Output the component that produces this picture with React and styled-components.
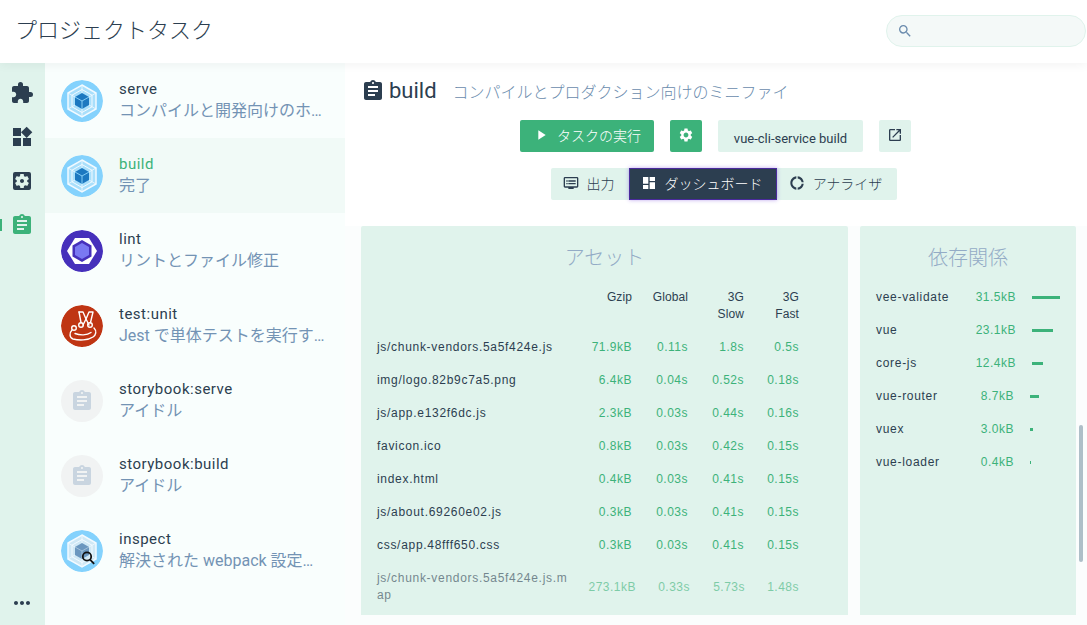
import React from 'react'
import styled, { createGlobalStyle } from 'styled-components'
import {
  MdExtension,
  MdWidgets,
  MdSettingsApplications,
  MdAssignment,
  MdMoreHoriz,
  MdSearch,
  MdPlayArrow,
  MdSettings,
  MdOpenInNew,
  MdDashboard,
  MdDonutLarge,
  MdDvr,
} from 'react-icons/md'

const FONT = '"Roboto", "Noto Sans CJK JP", sans-serif'
const DATA_FONT = '"Liberation Sans", "Noto Sans CJK JP", sans-serif'
const GREEN = '#3cb27a'
const DARK = '#2c3e50'
const BLUE = '#6a8bad'
const MINT = '#e0f3ec'

const GlobalStyle = createGlobalStyle`
  html, body {
    margin: 0;
    height: 100%;
    overflow: hidden;
    background: #fff;
    font-family: ${FONT};
    color: ${DARK};
  }
  * {
    box-sizing: border-box;
  }
`

const Page = styled.div`
  width: 1087px;
  height: 625px;
  display: flex;
  flex-direction: column;
  overflow: hidden;
`

const TopBar = styled.header`
  height: 63px;
  flex: none;
  display: flex;
  align-items: center;
  justify-content: space-between;
  padding: 0 1px 2px 15px;
  background: #fff;
  box-shadow: 0 2px 10px rgba(0, 0, 0, 0.05);
  position: relative;
  z-index: 2;
`

const PageTitle = styled.h1`
  margin: 0;
  font-size: 22px;
  font-weight: 300;
  line-height: 30px;
`

const SearchBox = styled.label`
  width: 200px;
  height: 32px;
  display: flex;
  align-items: center;
  gap: 4px;
  padding: 0 10px;
  background: #f4f9f8;
  border: 1px solid ${MINT};
  border-radius: 16px;
  color: ${BLUE};
  font-size: 16px;
`

const SearchInput = styled.input`
  flex: 1;
  min-width: 0;
  border: 0;
  outline: 0;
  background: transparent;
`

const Body = styled.div`
  flex: 1;
  min-height: 0;
  display: flex;
`

const SideNav = styled.nav`
  width: 45px;
  flex: none;
  display: flex;
  flex-direction: column;
  padding: 8px 1px 0 0;
  background: ${MINT};
`

const NavItem = styled.div`
  position: relative;
  height: 44px;
  display: flex;
  align-items: center;
  justify-content: center;
  font-size: 24px;
  color: ${(p) => (p.$active ? GREEN : DARK)};
  &::before {
    content: '';
    display: ${(p) => (p.$active ? 'block' : 'none')};
    position: absolute;
    left: 0;
    top: 16px;
    width: 2px;
    height: 12px;
    background: ${GREEN};
  }
`

const NavMore = styled(NavItem)`
  margin-top: auto;
`

const TaskList = styled.aside`
  width: 300px;
  flex: none;
  background: #f9fefd;
`

const TaskRow = styled.div`
  height: 75px;
  display: flex;
  align-items: center;
  gap: 16px;
  padding: 0 20px 0 16px;
  background: ${(p) => (p.$selected ? '#f1faf7' : 'transparent')};
`

const Avatar = styled.div`
  width: 42px;
  height: 42px;
  flex: none;
  display: flex;
  align-items: center;
  justify-content: center;
  border-radius: 50%;
  overflow: hidden;
  font-size: 24px;
  color: #c9d5e0;
  background: ${(p) => p.$bg || 'transparent'};
  svg {
    display: block;
  }
`

const TaskText = styled.div`
  min-width: 0;
  flex: 1;
  margin-top: -2px;
`

const TaskName = styled.div`
  font-size: 15px;
  line-height: 21px;
  letter-spacing: 0.5px;
  color: ${(p) => (p.$selected ? GREEN : DARK)};
`

const TaskStatus = styled.div`
  font-size: 16px;
  line-height: 21px;
  font-weight: 400;
  color: #7393b4;
  white-space: nowrap;
  overflow: hidden;
  text-overflow: ellipsis;
`

const Main = styled.main`
  position: relative;
  flex: 1;
  min-width: 0;
  display: flex;
  flex-direction: column;
  background: #fbfdfd;
`

const TaskHeader = styled.div`
  height: 57px;
  flex: none;
  display: flex;
  align-items: center;
  padding: 0 0 1px 16px;
  background: #fff;
`

const HeaderName = styled.span`
  margin-left: 4px;
  font-size: 22px;
  line-height: 30px;
`

const HeaderDesc = styled.span`
  margin-left: 16px;
  font-size: 16px;
  font-weight: 300;
  color: ${BLUE};
`

const Toolbars = styled.div`
  flex: none;
  height: 106px;
  display: flex;
  flex-direction: column;
  gap: 16px;
  background: #fff;
`

const ActionRow = styled.div`
  display: flex;
  gap: 16px;
  padding-left: 175px;
`

const TabRow = styled.div`
  display: flex;
  padding-left: 206px;
`

const Button = styled.div`
  height: 32px;
  display: flex;
  align-items: center;
  justify-content: center;
  gap: 8px;
  padding: 0 ${(p) => (p.$square ? 0 : 13)}px 3px;
  width: ${(p) => (p.$square ? '32px' : 'auto')};
  border-radius: 2px;
  font-size: 14px;
  font-weight: 300;
  white-space: nowrap;
  color: ${(p) => (p.$primary ? '#fff' : DARK)};
  background: ${(p) => (p.$primary ? GREEN : MINT)};
  svg {
    flex: none;
  }
`

const CommandButton = styled(Button)`
  width: 145px;
  font-size: 13px;
  font-weight: 400;
  padding-top: 4px;
  padding-bottom: 0;
`

const Tab = styled.div`
  width: ${(p) => p.$width}px;
  height: 32px;
  display: flex;
  align-items: center;
  justify-content: center;
  gap: 8px;
  padding: 0 3px 3px 0;
  font-size: 14px;
  font-weight: 300;
  white-space: nowrap;
  color: ${(p) => (p.$active ? '#fff' : DARK)};
  background: ${(p) => (p.$active ? DARK : MINT)};
  border-radius: ${(p) => (p.$active ? 0 : p.$end === 'left' ? '2px 0 0 2px' : '0 2px 2px 0')};
  box-shadow: ${(p) => (p.$active ? 'inset 0 0 0 1px #4a2a9c, 0 0 4px rgba(110, 60, 220, 0.45)' : 'none')};
  position: relative;
  z-index: ${(p) => (p.$active ? 1 : 0)};
`

const Dashboard = styled.div`
  flex: none;
  height: 389px;
  display: flex;
  gap: 12px;
  padding: 0 11px 0 16px;
`

const Card = styled.section`
  background: ${MINT};
  border-radius: 2px 2px 0 0;
  overflow: hidden;
  font-family: ${DATA_FONT};
  font-size: 12px;
  line-height: 17px;
`

const AssetsCard = styled(Card)`
  width: 487px;
`

const DepsCard = styled(Card)`
  width: 216px;
`

const CardTitle = styled.h2`
  margin: 0;
  padding-top: 19px;
  height: 63px;
  text-align: center;
  font-family: ${FONT};
  font-size: 20px;
  font-weight: 300;
  line-height: 26px;
  color: #93abc6;
`

const AssetRow = styled.div`
  display: grid;
  grid-template-columns: ${(p) => (p.$long ? '194px 65px 54px 55px 54px' : '190px 65px 56px 56px 55px')};
  align-items: center;
  padding: 8px 0 8px 16px;
  opacity: ${(p) => (p.$faded ? 0.6 : 1)};
`

const AssetHead = styled(AssetRow)`
  align-items: start;
  padding-top: 0;
`

const AssetName = styled.div`
  word-break: break-all;
  letter-spacing: 0.7px;
`

const HeadCell = styled.div`
  text-align: right;
  letter-spacing: 0.1px;
`

const Metric = styled.div`
  text-align: right;
  letter-spacing: 0.5px;
  color: ${GREEN};
`

const DepRow = styled.div`
  height: 33px;
  display: flex;
  align-items: center;
  padding: 0 16px;
  margin-top: ${(p) => (p.$first ? '-8px' : 0)};
`

const DepName = styled.div`
  flex: 1;
  letter-spacing: 0.7px;
`

const DepSize = styled(Metric)`
  margin-right: 16px;
`

const DepBarTrack = styled.div`
  width: ${(p) => p.$track}px;
  flex: none;
`

const DepBar = styled.div`
  height: 3px;
  background: ${GREEN};
`

const ScrollThumb = styled.div`
  position: absolute;
  right: 4px;
  top: 362px;
  width: 4px;
  height: 137px;
  border-radius: 2px;
  background: #aebfc8;
`

function WebpackLogo ({ faded }) {
  return (
    <svg width="42" height="42" viewBox="0 0 42 42">
      <circle cx="21" cy="21" r="21" fill="#84d2fd" />
      <polygon
        points="21,5 35,13 35,29 21,37 7,29 7,13"
        fill={faded ? '#cfe8f5' : '#a9dffb'}
        stroke="#f2faff"
        strokeWidth="1.5"
      />
      <polygon
        points="21,9.500 31,15.200 31,26.800 21,32.500 11,26.800 11,15.200"
        fill="none"
        stroke="#f2faff"
        strokeWidth="1"
      />
      <path d="M21 5v8M35 13l-7 4M35 29l-7-4M21 37v-8M7 29l7-4M7 13l7 4" stroke="#f2faff" strokeWidth="0.8" />
      <polygon points="21,13 28,17 28,25 21,29 14,25 14,17" fill={faded ? '#6b97bf' : '#1c78c0'} />
      <path d="M14 17l7 4 7-4M21 21v8" stroke={faded ? '#a9c6dd' : '#8ed6fb'} strokeWidth="0.9" fill="none" />
      {faded && (
        <g fill="none" stroke="#111" strokeWidth="1.8">
          <circle cx="26" cy="26.500" r="4.200" />
          <path d="M29 29.600l4.200 4.200" />
        </g>
      )}
    </svg>
  )
}

function EslintLogo () {
  return (
    <svg width="42" height="42" viewBox="0 0 42 42">
      <circle cx="21" cy="21" r="21" fill="#4630bb" />
      <polygon points="6,21 14,8 28,8 36,21 28,34 14,34" fill="#fff" />
      <polygon points="21,10 30.500,15.500 30.500,26.500 21,32 11.500,26.500 11.500,15.500" fill="#4630bb" />
      <polygon points="21,13 28,17 28,25 21,29 14,25 14,17" fill="#7a78f2" />
    </svg>
  )
}

function JestLogo () {
  return (
    <svg width="42" height="42" viewBox="0 0 42 42">
      <circle cx="21" cy="21" r="21" fill="#bf3513" />
      <g fill="none" stroke="#fff" strokeWidth="1.4" strokeLinejoin="round" strokeLinecap="round">
        <path d="M18 7h4l3 7 3-7h4l-2.500 10.500" />
        <path d="M18 7l2 10.500M22 20l3-6 3 6" />
        <circle cx="13" cy="23" r="2.300" />
        <circle cx="20" cy="20" r="2.300" />
        <circle cx="29" cy="20" r="2.300" />
        <path d="M11 25c-3 3-2.500 8 1 9 6 1.500 15 1.500 20-2 3-2 4-6 1-9" />
        <path d="M14 28.500c5 2 12 2 16-1" />
      </g>
    </svg>
  )
}

const tasks = [
  { name: 'serve', status: 'コンパイルと開発向けのホットリロード', logo: <WebpackLogo /> },
  { name: 'build', status: '完了', logo: <WebpackLogo />, selected: true },
  { name: 'lint', status: 'リントとファイル修正', logo: <EslintLogo /> },
  { name: 'test:unit', status: 'Jest で単体テストを実行する', logo: <JestLogo /> },
  { name: 'storybook:serve', status: 'アイドル', logo: <MdAssignment />, bg: '#f1f3f3' },
  { name: 'storybook:build', status: 'アイドル', logo: <MdAssignment />, bg: '#f1f3f3' },
  { name: 'inspect', status: '解決された webpack 設定を確認', logo: <WebpackLogo faded /> },
]

const assets = [
  ['js/chunk-vendors.5a5f424e.js', '71.9kB', '0.11s', '1.8s', '0.5s'],
  ['img/logo.82b9c7a5.png', '6.4kB', '0.04s', '0.52s', '0.18s'],
  ['js/app.e132f6dc.js', '2.3kB', '0.03s', '0.44s', '0.16s'],
  ['favicon.ico', '0.8kB', '0.03s', '0.42s', '0.15s'],
  ['index.html', '0.4kB', '0.03s', '0.41s', '0.15s'],
  ['js/about.69260e02.js', '0.3kB', '0.03s', '0.41s', '0.15s'],
  ['css/app.48fff650.css', '0.3kB', '0.03s', '0.41s', '0.15s'],
]

const deps = [
  { name: 'vee-validate', size: '31.5kB', track: 28, bar: 28 },
  { name: 'vue', size: '23.1kB', track: 28, bar: 21 },
  { name: 'core-js', size: '12.4kB', track: 28, bar: 11 },
  { name: 'vue-router', size: '8.7kB', track: 30, bar: 9 },
  { name: 'vuex', size: '3.0kB', track: 30, bar: 3 },
  { name: 'vue-loader', size: '0.4kB', track: 30, bar: 1 },
]

export default function App () {
  return (
    <Page>
      <GlobalStyle />
      <TopBar>
        <PageTitle>プロジェクトタスク</PageTitle>
        <SearchBox>
          <MdSearch />
          <SearchInput />
        </SearchBox>
      </TopBar>
      <Body>
        <SideNav>
          <NavItem><MdExtension /></NavItem>
          <NavItem><MdWidgets /></NavItem>
          <NavItem><MdSettingsApplications /></NavItem>
          <NavItem $active><MdAssignment /></NavItem>
          <NavMore><MdMoreHoriz /></NavMore>
        </SideNav>
        <TaskList>
          {tasks.map((task) => (
            <TaskRow key={task.name} $selected={task.selected}>
              <Avatar $bg={task.bg}>{task.logo}</Avatar>
              <TaskText>
                <TaskName $selected={task.selected}>{task.name}</TaskName>
                <TaskStatus>{task.status}</TaskStatus>
              </TaskText>
            </TaskRow>
          ))}
        </TaskList>
        <Main>
          <TaskHeader>
            <MdAssignment size={24} />
            <HeaderName>build</HeaderName>
            <HeaderDesc>コンパイルとプロダクション向けのミニファイ</HeaderDesc>
          </TaskHeader>
          <Toolbars>
            <ActionRow>
              <Button $primary><MdPlayArrow size={16} />タスクの実行</Button>
              <Button $primary $square><MdSettings size={16} /></Button>
              <CommandButton>vue-cli-service build</CommandButton>
              <Button $square><MdOpenInNew size={16} /></Button>
            </ActionRow>
            <TabRow>
              <Tab $width={78} $end="left"><MdDvr size={16} />出力</Tab>
              <Tab $width={148} $active><MdDashboard size={16} />ダッシュボード</Tab>
              <Tab $width={120} $end="right"><MdDonutLarge size={16} />アナライザ</Tab>
            </TabRow>
          </Toolbars>
          <Dashboard>
            <AssetsCard>
              <CardTitle>アセット</CardTitle>
              <AssetHead>
                <div />
                <HeadCell>Gzip</HeadCell>
                <HeadCell>Global</HeadCell>
                <HeadCell>3G<br />Slow</HeadCell>
                <HeadCell>3G<br />Fast</HeadCell>
              </AssetHead>
              {assets.map(([name, gzip, global, slow, fast]) => (
                <AssetRow key={name}>
                  <AssetName>{name}</AssetName>
                  <Metric>{gzip}</Metric>
                  <Metric>{global}</Metric>
                  <Metric>{slow}</Metric>
                  <Metric>{fast}</Metric>
                </AssetRow>
              ))}
              <AssetRow $long $faded>
                <AssetName>js/chunk-vendors.5a5f424e.js.map</AssetName>
                <Metric>273.1kB</Metric>
                <Metric>0.33s</Metric>
                <Metric>5.73s</Metric>
                <Metric>1.48s</Metric>
              </AssetRow>
            </AssetsCard>
            <DepsCard>
              <CardTitle>依存関係</CardTitle>
              {deps.map((dep, i) => (
                <DepRow key={dep.name} $first={i === 0}>
                  <DepName>{dep.name}</DepName>
                  <DepSize>{dep.size}</DepSize>
                  <DepBarTrack $track={dep.track}>
                    <DepBar style={{ width: dep.bar }} />
                  </DepBarTrack>
                </DepRow>
              ))}
            </DepsCard>
          </Dashboard>
          <ScrollThumb />
        </Main>
      </Body>
    </Page>
  )
}
